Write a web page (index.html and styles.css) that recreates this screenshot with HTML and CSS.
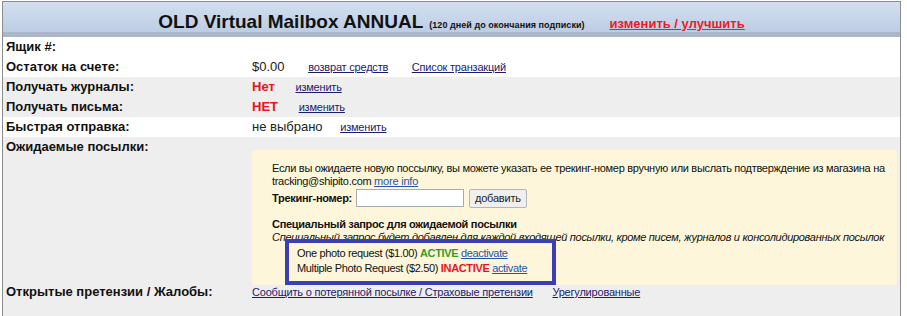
FILE: index.html
```html
<!DOCTYPE html>
<html lang="ru">
<head>
  <meta charset="UTF-8" />
  <meta name="viewport" content="width=device-width, initial-scale=1.0"/>
  <title>Ящик - Shipito</title>
  <link rel="stylesheet" href="styles.css">
</head>
<body>
  <div class="panel">
    <div class="panel-head">
      <span class="plan">OLD Virtual Mailbox ANNUAL</span>
      <span class="days">(120 дней до окончания подписки)</span>
      <a class="upgrade" href="#">изменить / улучшить</a>
    </div>

    <div class="row">
      <div class="label">Ящик #:</div>
      <div class="value"></div>
    </div>
    <div class="row">
      <div class="label">Остаток на счете:</div>
      <div class="value">$0.00 <a href="#">возврат средств</a> <a href="#">Список транзакций</a></div>
    </div>
    <div class="row alt">
      <div class="label">Получать журналы:</div>
      <div class="value"><span class="no">Нет</span> <a href="#" class="change">изменить</a></div>
    </div>
    <div class="row alt">
      <div class="label">Получать письма:</div>
      <div class="value"><span class="no">НЕТ</span> <a href="#" class="change">изменить</a></div>
    </div>
    <div class="row">
      <div class="label">Быстрая отправка:</div>
      <div class="value">не выбрано <a href="#" class="change quick">изменить</a></div>
    </div>

    <!-- ожидаемые посылки -->
    <div class="row alt expected">
      <div class="label">Ожидаемые посылки:</div>
      <div class="value">
        <div class="notice">
          <p>Если вы ожидаете новую поссылку, вы можете указать ее трекинг-номер вручную или выслать подтверждение из магазина на tracking@shipito.com <a href="#">more info</a></p>
          <form class="track" onsubmit="return false">
            <label for="trackNo">Трекинг-номер:</label>
            <input type="text" id="trackNo" />
            <button type="submit">добавить</button>
          </form>
          <div class="special-title">Специальный запрос для ожидаемой посылки</div>
          <div class="special-note">Специальный запрос будет добавлен для каждой входящей посылки, кроме писем, журналов и консолидированных посылок</div>
          <div class="photo-req">
            <div>One photo request ($1.00) <b class="on">ACTIVE</b> <a href="#">deactivate</a></div>
            <div>Multiple Photo Request ($2.50) <b class="off">INACTIVE</b> <a href="#">activate</a></div>
          </div>
        </div>
      </div>
    </div>

    <div class="row alt claims">
      <div class="label">Открытые претензии / Жалобы:</div>
      <div class="value">
        <a href="#">Сообщить о потерянной посылке / Страховые претензии</a>
        <a href="#" class="settled">Урегулированные</a>
      </div>
    </div>
  </div>
</body>
</html>
```

FILE: styles.css
```css
body {
  margin: 0;
  font-family: "Liberation Sans", Arial, sans-serif;
  color: #000;
  background: #fff;
}

.panel {
  margin: 1px 6px 0 2px;
  border: 1px solid #8c8c8c;
  border-bottom: none;
}

.panel-head {
  display: flex;
  align-items: baseline;
  justify-content: center;
  padding-top: 10px;
  height: 20px;
  line-height: 20px;
  background: linear-gradient(#d4dfef, #bccde4);
  border-bottom: 5px solid #abb6c9;
}

.plan {
  font-size: 19px;
  font-weight: bold;
  color: #111;
}

.days {
  margin-left: 6px;
  font-size: 9px;
  font-weight: bold;
  letter-spacing: 0.05px;
  color: #111;
}

.upgrade {
  margin-left: 25px;
  font-size: 13px;
  font-weight: bold;
  color: #ee1c23;
}

.row {
  display: grid;
  grid-template-columns: 249px 1fr;
  font-size: 13px;
  line-height: 20px;
}

.row.alt {
  background: #eeeeee;
}

.label {
  padding-left: 3px;
  font-weight: bold;
  color: #111;
}

.value {
  color: #222;
}

.value a {
  margin-left: 20px;
  font-size: 11px;
  letter-spacing: -0.2px;
  color: #1b1b6e;
}

.value a.change {
  margin-left: 17px;
}

.value a.quick {
  margin-left: 14px;
}

.no {
  color: #e8141b;
  font-weight: bold;
}

.expected .value {
  padding: 13px 3px 7px 0;
}

.notice {
  background: #fdf6da;
  border-radius: 3px;
  padding: 12px 6px 0 20px;
  font-size: 11px;
  line-height: 13px;
  letter-spacing: -0.3px;
  color: #111;
}

.notice p {
  margin: 0;
}

.notice a {
  margin-left: 0;
  color: #2455a8;
}

.track {
  display: flex;
  align-items: center;
  height: 18px;
  margin: 1px 0 0;
}

.track label {
  font-weight: bold;
}

.track input {
  box-sizing: border-box;
  width: 108px;
  height: 18px;
  margin: 0 0 0 4px;
  border: 1px solid #a5acb2;
  background: #fff;
}

.track button {
  height: 19px;
  margin-left: 5px;
  padding: 0 5px;
  font-family: inherit;
  font-size: 11px;
  letter-spacing: -0.2px;
  color: #222;
  background: #efefef;
  border: 1px solid #b5b5b5;
  border-radius: 2px;
}

.special-title {
  margin-top: 11px;
  font-weight: bold;
}

.special-note {
  font-style: italic;
}

.photo-req {
  position: relative;
  box-sizing: border-box;
  width: 271px;
  margin: -5px 0 -10px 13px;
  padding: 3px 0 5px 8px;
  border: 4px solid #3a3fb5;
  line-height: 15px;
  letter-spacing: -0.35px;
}

.photo-req a {
  letter-spacing: -0.35px;
}

.on {
  color: #3c9a28;
}

.off {
  color: #e8141b;
}

.claims {
  padding-bottom: 20px;
}

.claims .value a {
  margin-left: 0;
}

.claims .value a.settled {
  margin-left: 16px;
}
```
